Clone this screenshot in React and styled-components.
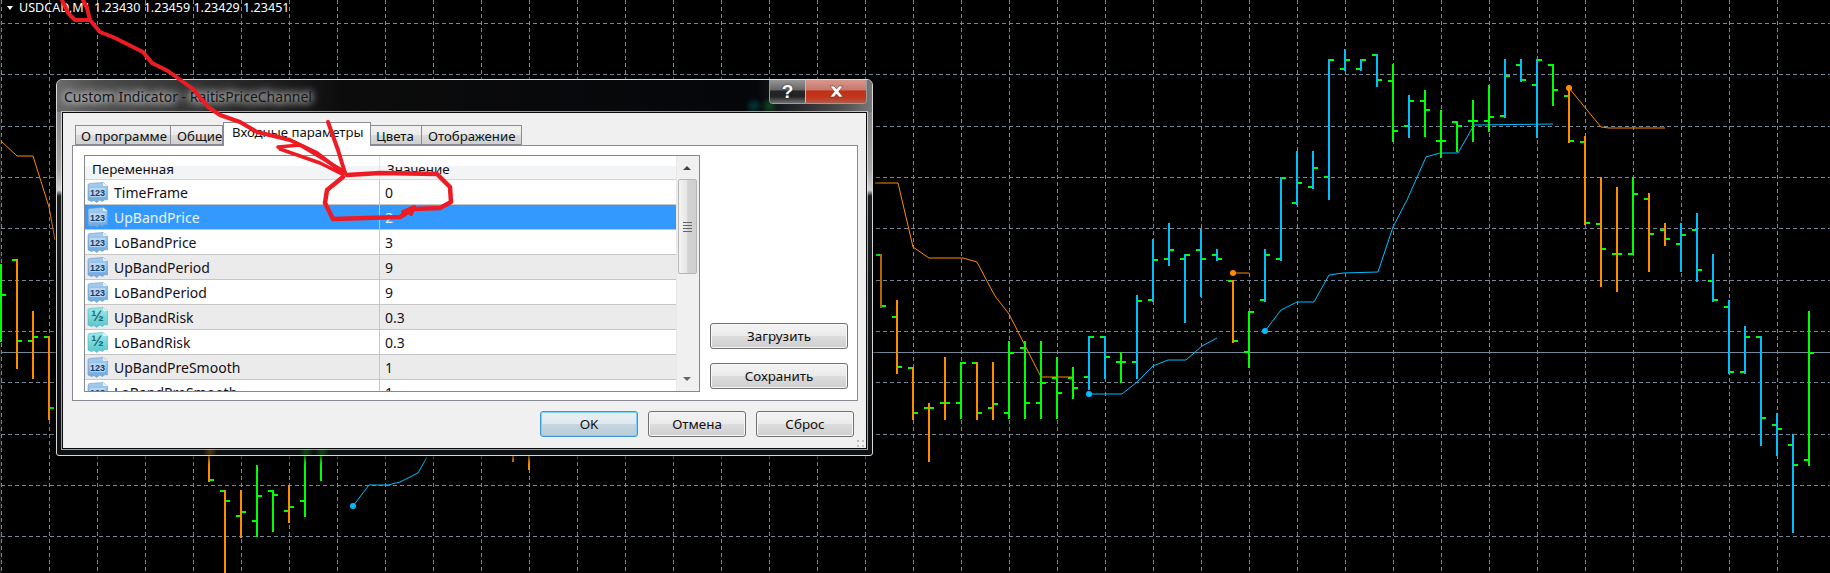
import styled, { createGlobalStyle } from 'styled-components';

const GlobalStyle = createGlobalStyle`
  html, body {
    margin: 0;
    padding: 0;
    background: #000;
    overflow: hidden;
  }
  body {
    font-family: 'Noto Sans', 'Open Sans', sans-serif;
  }
`;

const Page = styled.div`
  position: relative;
  width: 1830px;
  height: 573px;
  background: #000;
  overflow: hidden;
`;

const ChartSvg = styled.svg`
  display: block;
  width: 1830px;
  height: 573px;
`;

const SymbolLabel = styled.div`
  position: absolute;
  left: 7px;
  top: 0;
  display: flex;
  align-items: center;
  gap: 6px;
  height: 15px;
  color: #fff;
  font-size: 12.55px;
  white-space: nowrap;
`;

const Caret = styled.span`
  width: 0;
  height: 0;
  border-left: 3px solid transparent;
  border-right: 3px solid transparent;
  border-top: 4px solid #fff;
`;

const Dialog = styled.div`
  position: absolute;
  left: 56px;
  top: 79px;
  width: 817px;
  height: 377px;
  box-sizing: border-box;
  display: flex;
  flex-direction: column;
  border: 1px solid #d8d8d8;
  border-radius: 6px 6px 3px 3px;
  box-shadow: 0 2px 9px rgba(0, 0, 0, 0.9);
  background:
    radial-gradient(circle 7px at 153px 372px, rgba(220, 120, 0, 0.35), transparent),
    radial-gradient(circle 7px at 249px 372px, rgba(0, 220, 0, 0.28), transparent),
    radial-gradient(circle 7px at 265px 372px, rgba(0, 220, 0, 0.28), transparent),
    linear-gradient(180deg, #747474 0, #a5a5a5 90px, #cfcfcf 110px, #1c1f22 116px, #0e1114 100%);
  overflow: hidden;
`;

const TitleBar = styled.div`
  height: 32px;
  flex-shrink: 0;
  display: flex;
  justify-content: space-between;
  align-items: flex-start;
  padding: 0 5px 0 7px;
  background:
    radial-gradient(circle 9px at 697px 26px, rgba(0, 170, 170, 0.3), transparent),
    radial-gradient(circle 9px at 712px 26px, rgba(0, 200, 60, 0.3), transparent),
    linear-gradient(90deg, #6a6a6a 0, #4b4b4b 5%, #0c0c0c 35%, #04060a 86%, #4c4c4c 96%, #777 100%);
`;

const TitleText = styled.span`
  margin-top: 7px;
  font-size: 14px;
  line-height: 19px;
  color: #14161a;
  white-space: nowrap;
  text-shadow:
    0 0 6px rgba(255, 255, 255, 0.8),
    0 0 10px rgba(255, 255, 255, 0.7),
    0 0 14px rgba(255, 255, 255, 0.55),
    0 0 18px rgba(255, 255, 255, 0.45);
`;

const CaptionGroup = styled.div`
  display: flex;
  height: 24px;
  margin-top: -1px;
  border: 1px solid #9a9a9a;
  border-top: none;
  border-radius: 0 0 4px 4px;
  overflow: hidden;
`;

const CaptionButton = styled.div`
  display: flex;
  align-items: center;
  justify-content: center;
  width: ${(p) => p.$width}px;
  background: ${(p) =>
    p.$close
      ? 'linear-gradient(180deg, #d89a90 0, #c9786c 45%, #bf3117 50%, #c4351a 78%, #a8604f 100%)'
      : 'linear-gradient(180deg, #9b9b9b 0, #666 45%, #242628 50%, #1f2123 72%, #6f7072 100%)'};
  border-left: ${(p) => (p.$close ? '1px solid #bdbdbd' : 'none')};
  color: #fff;
  font-family: 'Liberation Sans', sans-serif;
  font-weight: 700;
  font-size: 19px;
  line-height: 1;
  text-shadow: 0 0 2px #222;
`;

const Client = styled.div`
  position: relative;
  flex: 1;
  display: flex;
  flex-direction: column;
  margin: 0 5px 6px 5px;
  padding: 9px 8px 0 9px;
  box-sizing: border-box;
  background: #f0f0f0;
  border: 1px solid #08090b;
  box-shadow: 0 0 0 1px rgba(255, 255, 255, 0.6);
`;

const TabStrip = styled.div`
  display: flex;
  align-items: flex-end;
  height: 23px;
  padding-left: 3px;
  flex-shrink: 0;
`;

const Tab = styled.div`
  position: relative;
  z-index: ${(p) => (p.$active ? 1 : 0)};
  box-sizing: border-box;
  width: ${(p) => p.$width}px;
  height: ${(p) => (p.$active ? 24 : 20)}px;
  margin-bottom: ${(p) => (p.$active ? -1 : 0)}px;
  padding-left: ${(p) => p.$inset}px;
  border: 1px solid #898c95;
  border-left-width: ${(p) => (p.$active ? 1 : 0)}px;
  border-bottom: ${(p) => (p.$active ? 'none' : '1px solid #898c95')};
  background: ${(p) => (p.$active ? '#fff' : 'linear-gradient(180deg, #f2f2f2 0, #ebebeb 50%, #dcdcdc 52%, #cfcfcf 100%)')};
  color: #111;
  font-size: 13.2px;
  line-height: ${(p) => (p.$active ? 19 : 21)}px;
  white-space: nowrap;
  overflow: hidden;
  &:first-child {
    border-left-width: 1px;
  }
`;

const Panel = styled.div`
  display: flex;
  gap: 10px;
  height: 256px;
  flex-shrink: 0;
  box-sizing: border-box;
  padding: 9px 11px 8px 11px;
  background: #fff;
  border: 1px solid #898c95;
`;

const ParamList = styled.div`
  display: flex;
  width: 616px;
  height: 237px;
  flex-shrink: 0;
  box-sizing: border-box;
  border: 1px solid #828790;
  overflow: hidden;
`;

const ParamTable = styled.div`
  width: 591px;
  flex-shrink: 0;
  overflow: hidden;
`;

const HeaderRow = styled.div`
  display: flex;
  height: 24px;
  box-sizing: border-box;
  background: linear-gradient(180deg, #fff 10px, #f3f4f6 10px);
  border-bottom: 1px solid #d5d5d5;
  color: #111;
  font-size: 13.4px;
  line-height: 27px;
`;

const HeaderCell = styled.div`
  box-sizing: border-box;
  width: ${(p) => (p.$first ? '295px' : 'auto')};
  padding-left: 7px;
  border-right: ${(p) => (p.$first ? '1px solid #e3e3e3' : 'none')};
`;

const Row = styled.div`
  display: flex;
  height: 25px;
  box-sizing: border-box;
  background: ${(p) => (p.$selected ? '#3399ff' : p.$alt ? '#ebebeb' : '#fff')};
  color: ${(p) => (p.$selected ? '#e8f3ff' : '#15101a')};
  border-bottom: 1px solid #c6c6c6;
  font-size: 14px;
  line-height: 24px;
`;

const NameCell = styled.div`
  box-sizing: border-box;
  width: 295px;
  display: flex;
  align-items: center;
  gap: 5px;
  padding-left: 2px;
  border-right: 1px solid #c6c6c6;
`;

const ParamName = styled.span`
  padding-top: 2px;
`;

const ValueCell = styled.div`
  padding: 1px 0 0 5px;
`;

const ScrollBar = styled.div`
  flex: 1;
  display: flex;
  flex-direction: column;
  background: #f0f0f0;
  border-left: 1px solid #e8e8e8;
`;

const ScrollButton = styled.div`
  height: ${(p) => (p.$down ? 24 : 23)}px;
  flex-shrink: 0;
  display: flex;
  align-items: center;
  justify-content: center;
  padding-right: 2px;
`;

const ScrollArrow = styled.span`
  width: 0;
  height: 0;
  border-left: 4px solid transparent;
  border-right: 4px solid transparent;
  ${(p) => (p.$down ? 'border-top: 4px solid #666;' : 'border-bottom: 4px solid #444;')}
`;

const ScrollThumb = styled.div`
  height: 95px;
  flex-shrink: 0;
  display: flex;
  flex-direction: column;
  align-items: center;
  justify-content: center;
  gap: 2px;
  margin: 0 2px 0 1px;
  box-sizing: border-box;
  border: 1px solid #b5b5b5;
  border-radius: 2px;
  background: linear-gradient(90deg, #f4f4f4 0, #e6e6e6 45%, #d2d2d2 52%, #cfcfcf 100%);
`;

const ThumbGrip = styled.span`
  width: 9px;
  height: 1px;
  background: #666;
`;

const ScrollTrack = styled.div`
  flex: 1;
`;

const SideButtons = styled.div`
  align-self: flex-end;
  display: flex;
  flex-direction: column;
  gap: 14px;
  margin-bottom: 3px;
`;

const PushButton = styled.div`
  box-sizing: border-box;
  width: ${(p) => p.$width}px;
  height: 26px;
  display: flex;
  align-items: center;
  justify-content: center;
  border: 1px solid ${(p) => (p.$focused ? '#3c9ad0' : '#707070')};
  border-radius: 3px;
  background: ${(p) =>
    p.$focused
      ? 'linear-gradient(180deg, #e9f1f6 0, #dfe9ef 48%, #c6d6e0 52%, #b8ccd8 100%)'
      : 'linear-gradient(180deg, #f3f3f3 0, #ebebeb 48%, #dcdcdc 52%, #cfcfcf 100%)'};
  box-shadow: ${(p) => (p.$focused ? 'inset 0 0 0 1px #7fd0f5' : 'inset 0 0 0 1px #f7f7f7')};
  color: #111;
  font-size: 13.4px;
`;

const Footer = styled.div`
  display: flex;
  justify-content: flex-end;
  gap: 10px;
  margin: 10px 4px 0 0;
`;

const SizeGrip = styled.span`
  position: absolute;
  right: 2px;
  bottom: 1px;
  width: 7px;
  height: 7px;
  background:
    linear-gradient(#bdbdbd, #bdbdbd) 0 0 / 2px 2px no-repeat,
    linear-gradient(#bdbdbd, #bdbdbd) 5px 0 / 2px 2px no-repeat,
    linear-gradient(#bdbdbd, #bdbdbd) 0 5px / 2px 2px no-repeat,
    linear-gradient(#bdbdbd, #bdbdbd) 5px 5px / 2px 2px no-repeat;
`;

const AnnotationSvg = styled.svg`
  position: absolute;
  z-index: 2;
  left: 0;
  top: 0;
  width: 1830px;
  height: 573px;
  pointer-events: none;
`;

const GRID = '#778899';
const BLUE = '#00bfff';
const GREEN = '#00ff00';
const ORANGE = '#ff8c00';

const gridX = Array.from({ length: 38 }, (_, i) => 1 + i * 48);
const gridY = [23, 74, 126, 177, 228, 280, 331, 382, 434, 485, 536];

// x, top, bottom, open tick, close tick, colour
const bars = [
  [1, 264, 342, null, 295, GREEN],
  [17, 259, 369, 260, 341, ORANGE],
  [33, 311, 379, 341, 337, ORANGE],
  [49, 336, 420, 337, 408, ORANGE],
  [209, 440, 482, null, 480, ORANGE],
  [225, 490, 573, 491, 501, ORANGE],
  [241, 490, 538, 516, 512, ORANGE],
  [257, 465, 537, 521, 496, GREEN],
  [273, 490, 532, 491, 495, GREEN],
  [289, 485, 523, 511, 507, ORANGE],
  [305, 440, 517, 501, null, GREEN],
  [321, 440, 481, null, null, GREEN],
  [513, 440, 462, null, null, ORANGE],
  [529, 440, 470, null, null, ORANGE],
  [881, 254, 308, 255, 306, '#b86a00'],
  [897, 300, 374, 317, 367, ORANGE],
  [913, 367, 420, 368, 413, ORANGE],
  [929, 403, 462, 408, 408, ORANGE],
  [945, 357, 420, 403, 403, ORANGE],
  [961, 362, 419, 403, 363, GREEN],
  [977, 362, 420, 363, 413, ORANGE],
  [993, 362, 420, 408, 404, ORANGE],
  [1009, 341, 419, 413, 353, GREEN],
  [1025, 341, 419, 348, 403, GREEN],
  [1041, 341, 419, 403, 383, GREEN],
  [1057, 357, 419, 378, 393, GREEN],
  [1073, 367, 399, 378, 388, GREEN],
  [1089, 336, 390, 377, 337, BLUE],
  [1105, 336, 379, 337, 357, BLUE],
  [1121, 352, 383, 362, 362, GREEN],
  [1137, 295, 379, 362, 301, BLUE],
  [1153, 239, 302, 300, 260, BLUE],
  [1169, 223, 266, 259, 250, BLUE],
  [1185, 254, 323, 259, 255, BLUE],
  [1201, 229, 297, 250, 259, BLUE],
  [1217, 249, 261, 255, 259, BLUE],
  [1233, 280, 343, 281, 341, ORANGE],
  [1249, 311, 368, 352, 312, GREEN],
  [1265, 249, 302, 300, 255, BLUE],
  [1281, 177, 261, 259, 178, BLUE],
  [1297, 151, 205, 203, 183, BLUE],
  [1313, 151, 189, 187, 168, BLUE],
  [1329, 59, 200, 177, 60, BLUE],
  [1345, 49, 71, 69, 60, BLUE],
  [1361, 59, 71, 69, 60, BLUE],
  [1377, 54, 87, 55, 80, BLUE],
  [1393, 64, 142, 81, 131, GREEN],
  [1409, 95, 138, 126, 101, BLUE],
  [1425, 90, 137, 101, 110, GREEN],
  [1441, 110, 158, 141, 141, GREEN],
  [1457, 121, 152, 122, 126, GREEN],
  [1473, 100, 142, 121, 121, GREEN],
  [1489, 85, 132, 121, 117, GREEN],
  [1505, 59, 118, 116, 76, BLUE],
  [1521, 59, 82, 65, 80, BLUE],
  [1537, 59, 138, 85, 60, BLUE],
  [1553, 64, 106, 65, 90, GREEN],
  [1569, 88, 143, 96, 141, ORANGE],
  [1585, 136, 225, 142, 223, ORANGE],
  [1601, 177, 287, 224, 249, ORANGE],
  [1617, 187, 292, 254, 254, ORANGE],
  [1633, 177, 255, 254, 194, GREEN],
  [1649, 193, 272, 199, 234, ORANGE],
  [1665, 223, 246, 230, 239, ORANGE],
  [1681, 223, 272, 244, 235, BLUE],
  [1697, 213, 282, 230, 270, BLUE],
  [1713, 254, 302, 281, 300, BLUE],
  [1729, 300, 374, 307, 372, BLUE],
  [1745, 326, 374, 372, 337, BLUE],
  [1761, 336, 446, 337, 418, BLUE],
  [1777, 413, 456, 425, 429, BLUE],
  [1793, 434, 533, 445, 465, BLUE],
  [1809, 311, 466, 460, 353, GREEN],
];

const lines = [
  { color: ORANGE, points: '1,141 17,156 33,156 49,207 55,240' },
  { color: ORANGE, points: '875,183 898,183 913,247 929,258 963,258 977,262 988,283 995,296 1009,314 1041,377 1073,377' },
  { color: ORANGE, points: '1233,273 1249,273' },
  { color: ORANGE, points: '1569,88 1601,127 1609,128 1665,128' },
  { color: BLUE, points: '353,506 369,485 388,485 400,482 418,473 427,457' },
  { color: BLUE, points: '1089,394 1122,394 1137,382 1153,366 1168,360 1186,360 1202,346 1217,338' },
  { color: BLUE, points: '1265,331 1281,310 1297,302 1314,302 1329,275 1343,273 1378,272 1393,227 1407,200 1426,157 1440,153 1458,153 1474,125 1553,124' },
];

const dots = [
  [1233, 273, ORANGE],
  [1569, 88, ORANGE],
  [1089, 394, BLUE],
  [1265, 331, BLUE],
  [353, 506, BLUE],
];

const tabs = [
  { label: 'О программе', width: 96, inset: 5 },
  { label: 'Общие', width: 52, inset: 6 },
  { label: 'Входные параметры', width: 148, inset: 8, active: true },
  { label: 'Цвета', width: 51, inset: 5 },
  { label: 'Отображение', width: 100, inset: 6 },
];

const params = [
  { name: 'TimeFrame', value: '0', kind: 'int' },
  { name: 'UpBandPrice', value: '2', kind: 'int', selected: true },
  { name: 'LoBandPrice', value: '3', kind: 'int' },
  { name: 'UpBandPeriod', value: '9', kind: 'int', alt: true },
  { name: 'LoBandPeriod', value: '9', kind: 'int' },
  { name: 'UpBandRisk', value: '0.3', kind: 'float', alt: true },
  { name: 'LoBandRisk', value: '0.3', kind: 'float' },
  { name: 'UpBandPreSmooth', value: '1', kind: 'int', alt: true },
  { name: 'LoBandPreSmooth', value: '1', kind: 'int' },
];

const Chart = () => (
  <ChartSvg viewBox="0 0 1830 573">
    <rect x="0" y="0" width="1" height="573" fill="#1c1c1c" />
    <g stroke={GRID} strokeWidth="1" strokeDasharray="4 3" shapeRendering="crispEdges">
      {gridX.map((x) => (
        <line key={x} x1={x + 0.5} y1="0" x2={x + 0.5} y2="573" />
      ))}
      {gridY.map((y) => (
        <line key={y} x1="1" y1={y + 0.5} x2="1830" y2={y + 0.5} />
      ))}
    </g>
    <line x1="1" y1="352.5" x2="1830" y2="352.5" stroke={GRID} strokeWidth="1" />
    {lines.map((l) => (
      <polyline key={l.points} points={l.points} fill="none" stroke={l.color} strokeWidth="1" />
    ))}
    <g shapeRendering="crispEdges">
      {bars.map(([x, top, bottom, open, close, color]) => (
        <g key={x}>
          <rect x={x - 1} y={top} width="2" height={bottom - top} fill={color} />
          {open !== null && <rect x={x - 5} y={open - 1} width="4" height="2" fill={GREEN} />}
          {close !== null && <rect x={x + 1} y={close - 1} width="4" height="2" fill={GREEN} />}
        </g>
      ))}
    </g>
    {dots.map(([x, y, color]) => (
      <circle key={x} cx={x} cy={y} r="3" fill={color} />
    ))}
  </ChartSvg>
);

const ParamIcon = ({ kind }) => {
  const isInt = kind === 'int';
  const id = isInt ? 'iconInt' : 'iconFloat';
  return (
    <svg width="22" height="21" viewBox="0 0 22 21" style={{ flexShrink: 0 }}>
      <defs>
        <linearGradient id={id} x1="0" y1="0" x2="0" y2="1">
          <stop offset="0" stopColor={isInt ? '#a9cdf0' : '#a0eaea'} />
          <stop offset="1" stopColor={isInt ? '#6ea6de' : '#55c4cc'} />
        </linearGradient>
      </defs>
      <path
        d="M1 3 Q1 1.5 3 1.5 L16 0.5 L20.5 4 L20.5 18 L18 17.5 L15.5 19.5 L12.5 18 L10 20.5 L7 18.5 L4.5 19.5 L1 18 Z"
        fill={`url(#${id})`}
        stroke={isInt ? '#6a9ccb' : '#4fb3bb'}
        strokeWidth="0.6"
      />
      <path d="M16 0.5 L16 4 L20.5 4 Z" fill="#e8f3fb" />
      {isInt && <rect x="2.5" y="6" width="16" height="9" rx="1" fill="#c4ddf3" opacity="0.75" />}
      <text
        x="10.5"
        y="14"
        textAnchor="middle"
        fontFamily="Liberation Sans, sans-serif"
        fontWeight="700"
        fontSize={isInt ? 9 : 15}
        fill={isInt ? '#123d6b' : '#1b6f7a'}
      >
        {isInt ? '123' : '½'}
      </text>
    </svg>
  );
};

const Annotation = () => (
  <AnnotationSvg viewBox="0 0 1830 573">
    <g fill="none" stroke="#ed1c24" strokeLinecap="round" strokeLinejoin="round">
      <polyline strokeWidth="4" points="62,0 68,13 75,20 90,20 87,8 83,0" />
      <polyline
        strokeWidth="4"
        points="90,20 100,32 113,37 143,52 152,63 168,71 193,89 208,107 220,115 240,122 257,132 290,140 317,153 343,173"
      />
      <polyline strokeWidth="4" points="328,122 338,150 345,173" />
      <polyline strokeWidth="3.5" points="278,147 300,145 345,172" />
      <polyline strokeWidth="3.5" points="280,149 320,163 342,174" />
      <polyline
        strokeWidth="4.5"
        points="347,175 380,173 437,174 450,187 451,202 440,208 413,209 400,217 333,219 325,203 327,190 343,177"
      />
      <polyline strokeWidth="4" points="403,212 414,207 411,214" />
    </g>
  </AnnotationSvg>
);

const App = () => (
  <Page>
    <GlobalStyle />
    <Chart />
    <SymbolLabel>
      <Caret />
      USDCAD,M1 1.23430 1.23459 1.23429 1.23451
    </SymbolLabel>
    <Dialog>
      <TitleBar>
        <TitleText>Custom Indicator - RaitisPriceChannel</TitleText>
        <CaptionGroup>
          <CaptionButton $width={35}>?</CaptionButton>
          <CaptionButton $width={60} $close>
            <svg width="15" height="13" viewBox="0 0 15 13">
              <path
                d="M1 1 H5 L7.5 4 L10 1 H14 L9.7 6.5 L14 12 H10 L7.5 9 L5 12 H1 L5.3 6.5 Z"
                fill="#fff"
                stroke="#6b3a30"
                strokeWidth="0.6"
              />
            </svg>
          </CaptionButton>
        </CaptionGroup>
      </TitleBar>
      <Client>
        <TabStrip>
          {tabs.map((t) => (
            <Tab key={t.label} $width={t.width} $inset={t.inset} $active={t.active}>
              {t.label}
            </Tab>
          ))}
        </TabStrip>
        <Panel>
          <ParamList>
            <ParamTable>
              <HeaderRow>
                <HeaderCell $first>Переменная</HeaderCell>
                <HeaderCell>Значение</HeaderCell>
              </HeaderRow>
              {params.map((p) => (
                <Row key={p.name} $alt={p.alt} $selected={p.selected}>
                  <NameCell>
                    <ParamIcon kind={p.kind} />
                    <ParamName>{p.name}</ParamName>
                  </NameCell>
                  <ValueCell>{p.value}</ValueCell>
                </Row>
              ))}
            </ParamTable>
            <ScrollBar>
              <ScrollButton>
                <ScrollArrow />
              </ScrollButton>
              <ScrollThumb>
                <ThumbGrip />
                <ThumbGrip />
                <ThumbGrip />
                <ThumbGrip />
              </ScrollThumb>
              <ScrollTrack />
              <ScrollButton $down>
                <ScrollArrow $down />
              </ScrollButton>
            </ScrollBar>
          </ParamList>
          <SideButtons>
            <PushButton $width={138}>Загрузить</PushButton>
            <PushButton $width={138}>Сохранить</PushButton>
          </SideButtons>
        </Panel>
        <Footer>
          <PushButton $width={98} $focused>
            OK
          </PushButton>
          <PushButton $width={98}>Отмена</PushButton>
          <PushButton $width={98}>Сброс</PushButton>
        </Footer>
        <SizeGrip />
      </Client>
    </Dialog>
    <Annotation />
  </Page>
);

export default App;
